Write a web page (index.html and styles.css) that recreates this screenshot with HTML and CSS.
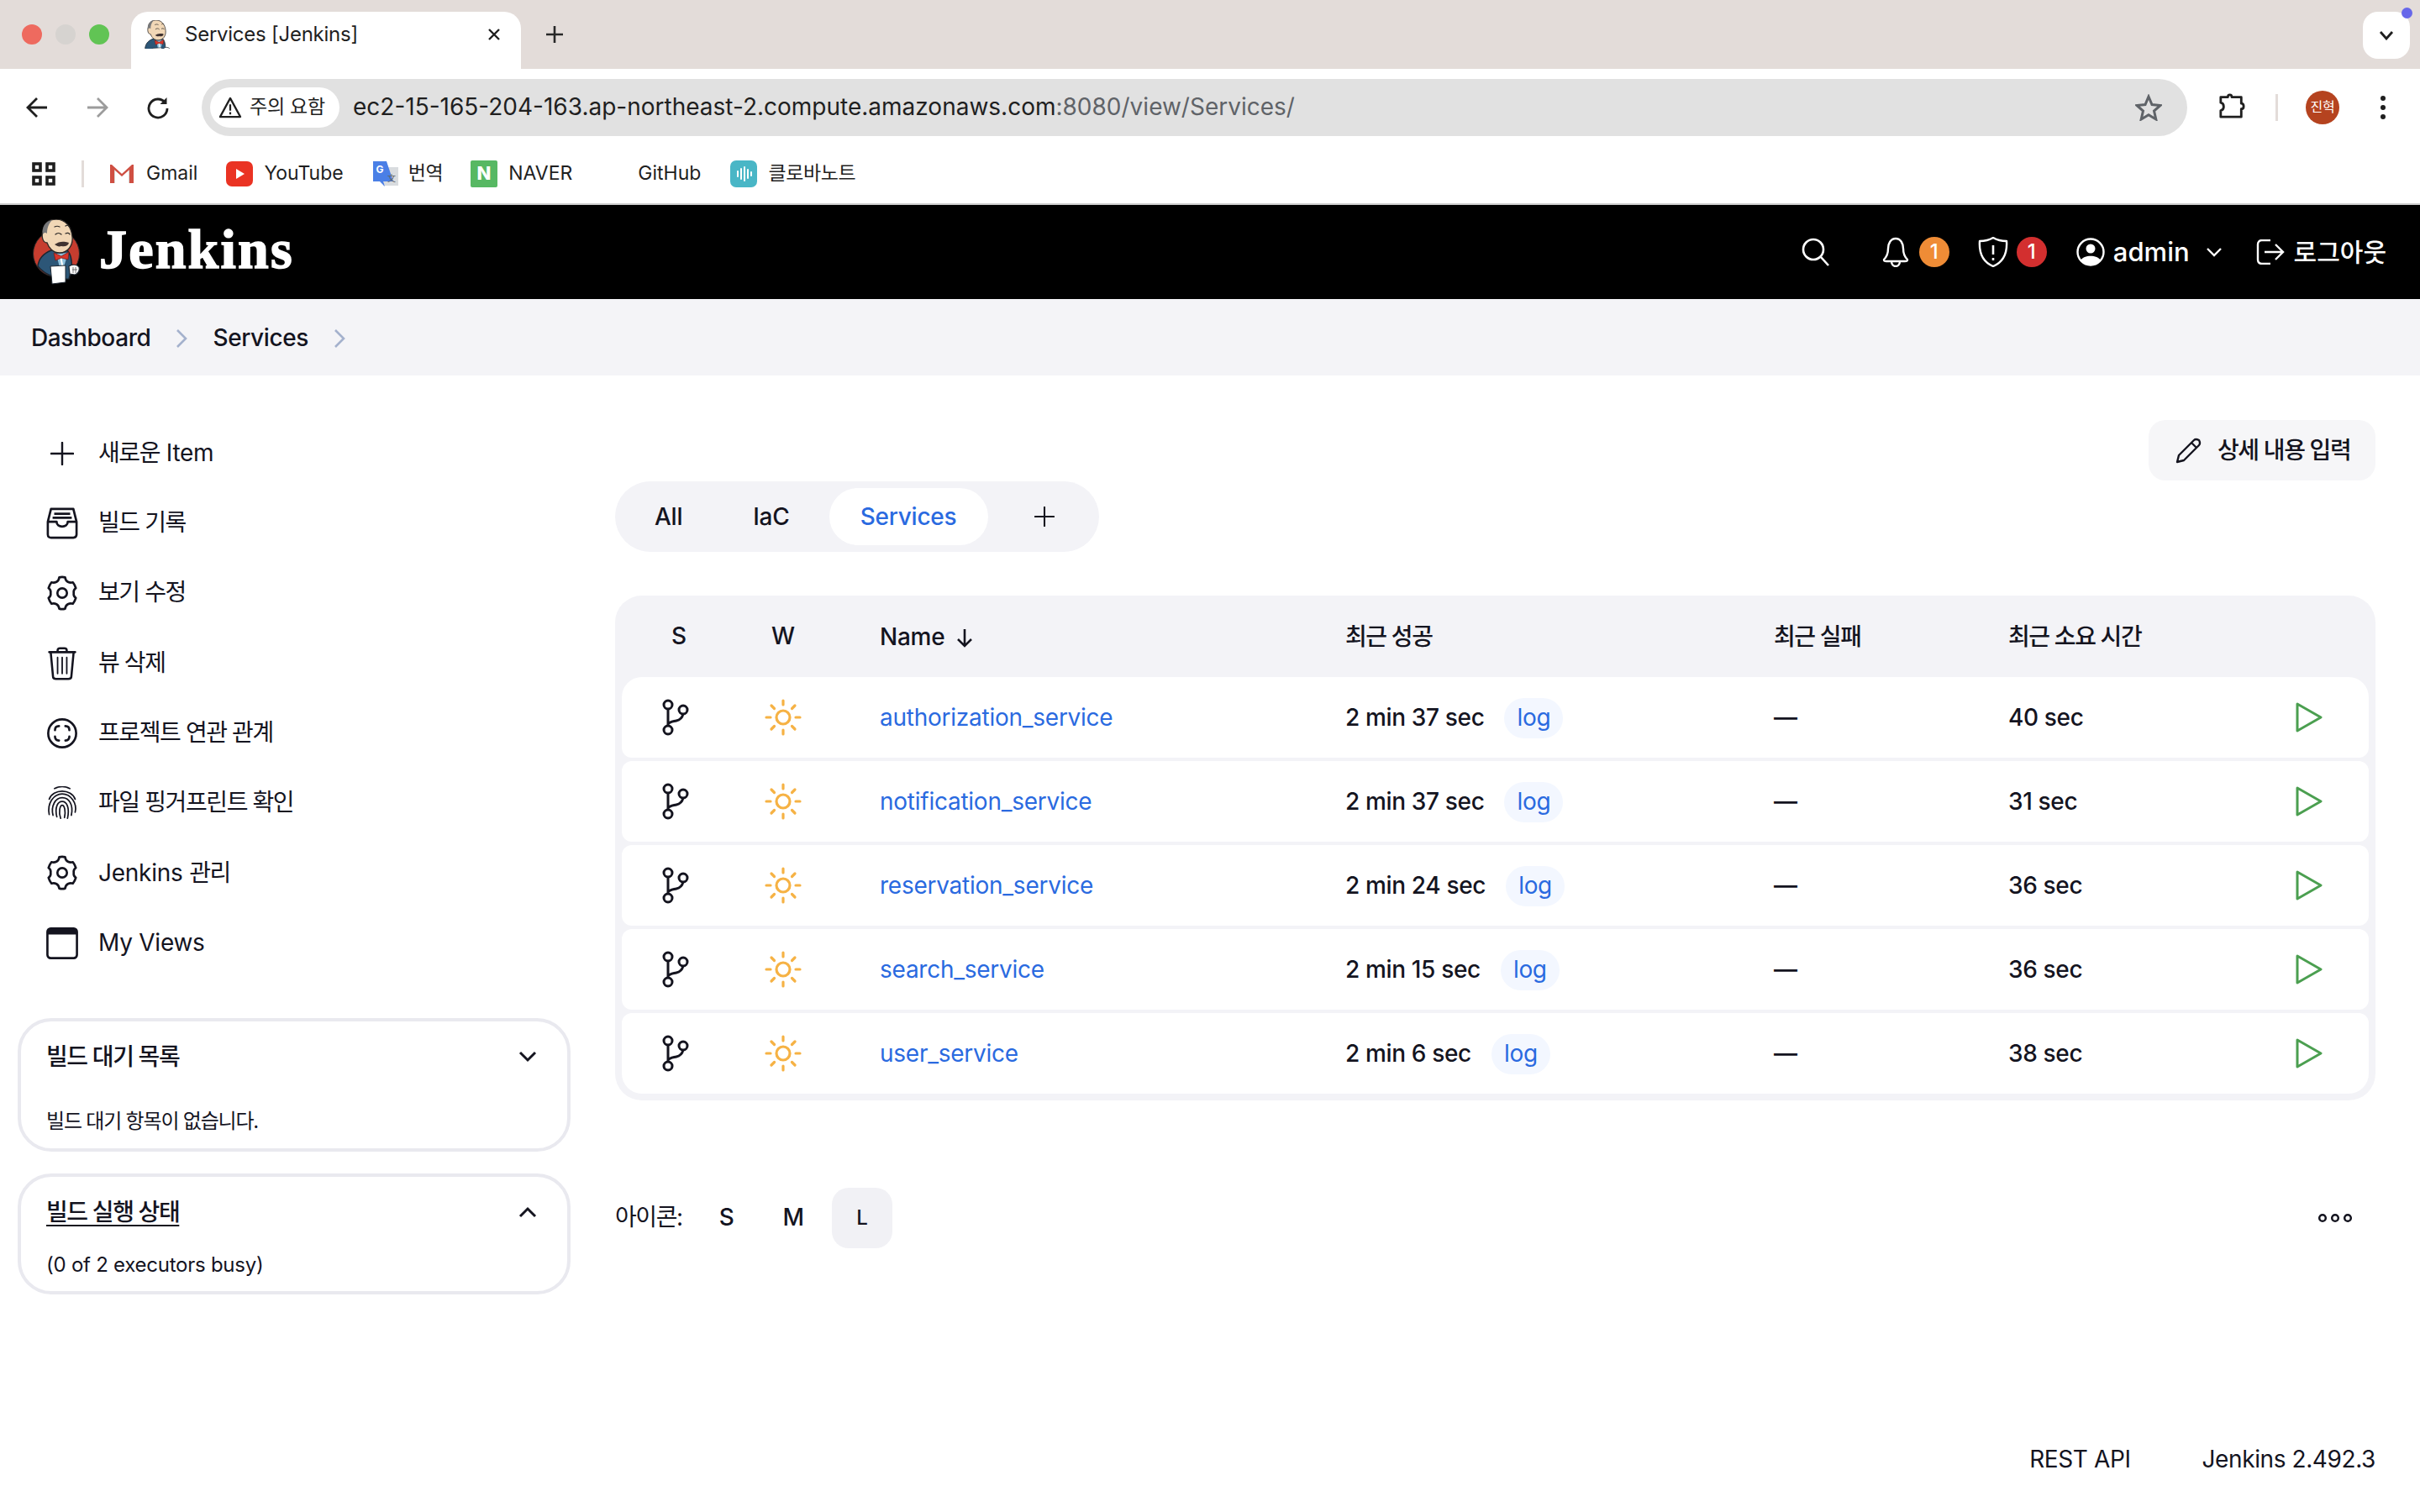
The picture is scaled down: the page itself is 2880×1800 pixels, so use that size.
FILE: index.html
```html
<!DOCTYPE html>
<html lang="ko">
<head>
<meta charset="utf-8">
<title>Services [Jenkins]</title>
<link rel="stylesheet" href="styles.css">
</head>
<body>
<svg class="defs" width="0" height="0" aria-hidden="true">
  <symbol id="butler" viewBox="0 0 56 78">
    <path d="M6 56C7 47 12 41 22 37L40 36C46 41 47 50 46 60L43 71C33 72 16 68 6 56Z" fill="#2c5677" stroke="#1d2630" stroke-width="1.4"/>
    <path d="M28 41L42 40L36 60L33 62Z" fill="#8fc0dc"/>
    <path d="M33 43L36 60" stroke="#fff" stroke-width="2"/>
    <path d="M25 40L34 44L43 39L42 48L34 46L27 49Z" fill="#d9362b" stroke="#7c1d16" stroke-width=".8"/>
    <path d="M12 14C13 4 20 0 28 0C39 0 46 9 47 21C48 31 42 40 32 40C24 40 19 34 17 28C12 28 10 21 12 14Z" fill="#f1d7b6" stroke="#2d2a28" stroke-width="1.3"/>
    <path d="M12 18C10 9 16 2 23 1C18 6 17 12 17 17C15 15 13 16 12 18Z" fill="#77787a"/>
    <path d="M27 18c2-2 5-2 7 0M39 17c2-1 4-1 5 1M26 9c2-1 4-1 6 0M39 8c1-1 3-1 4 0" fill="none" stroke="#2d2a28" stroke-width="1.2" stroke-linecap="round"/>
    <path d="M26 30c4-3 9-4 13-3c2 0 3 1 4 1c-1 4-5 5-9 4c-3 1-5 0-8-2Z" fill="#3f3230"/>
    <path d="M21 56L39 55L39 75L23 77Z" fill="#fff" stroke="#1d2630" stroke-width="1"/>
    <path d="M43 56C47 53 53 54 55 57C56 61 54 65 50 66L44 65Z" fill="#fff" stroke="#1d2630" stroke-width="1.2"/>
    <path d="M48 57v7M51 57v7M47 60h6" stroke="#555" stroke-width=".8"/>
  </symbol>
  <symbol id="gear" viewBox="0 0 40 44">
    <path d="M16.300 2.400Q20 1.200 23.700 2.400Q24.200 6.600 27.200 8.100Q30.200 9.600 33.400 8.600Q36 12 37.100 15.800Q33.800 18 34.500 22Q33.800 26 37.100 28.200Q36 32 33.400 35.400Q30.200 34.400 27.200 35.900Q24.200 37.400 23.700 41.600Q20 42.800 16.300 41.600Q15.800 37.400 12.800 35.900Q9.800 34.400 6.600 35.400Q4 32 2.900 28.200Q6.200 26 5.500 22Q6.200 18 2.900 15.800Q4 12 6.600 8.600Q9.800 9.600 12.800 8.100Q15.800 6.600 16.300 2.400Z" fill="none" stroke="#14141f" stroke-width="2.800" stroke-linejoin="round"/>
    <circle cx="20" cy="22" r="6" fill="none" stroke="#14141f" stroke-width="2.800"/>
  </symbol>
  <symbol id="branch" viewBox="0 0 42 44">
    <g fill="none" stroke="#14141f" stroke-width="3">
      <circle cx="8" cy="7" r="5"/><circle cx="8" cy="37" r="5"/><circle cx="26" cy="13" r="5"/>
      <path d="M8 12V32M8 30c2-3 6-3 10-4c5-1 7-4 8-8"/>
    </g>
  </symbol>
  <symbol id="sun" viewBox="0 0 44 44">
    <g fill="none" stroke="#f6b244" stroke-width="3.200" stroke-linecap="round">
      <circle cx="22" cy="22" r="8"/>
      <path d="M22 2v5M22 37v5M2 22h5M37 22h5M8 8l3.500 3.500M32.500 32.500l3.500 3.500M8 36l3.500-3.500M32.500 11.500l3.500-3.500"/>
    </g>
  </symbol>
  <symbol id="play" viewBox="0 0 32 36">
    <path d="M2 2L30 18L2 34Z" fill="none" stroke="#4b9f50" stroke-width="3" stroke-linejoin="round"/>
  </symbol>
  <symbol id="plus" viewBox="0 0 30 30">
    <path d="M15 1V29M1 15H29" stroke="#14141f" stroke-width="2.600" stroke-linecap="round"/>
  </symbol>
</svg>

<div class="app">
  <div class="tabstrip">
    <div class="lights"><span class="light red"></span><span class="light gray"></span><span class="light green"></span></div>
    <div class="tab">
      <svg class="favicon" viewBox="5 0 50 57"><use href="#butler" width="56" height="78"/></svg>
      <span class="tab-title">Services [Jenkins]</span>
      <svg class="tab-close" viewBox="0 0 16 16"><path d="M2 2L14 14M14 2L2 14" stroke="#1f1f1f" stroke-width="2.400"/></svg>
    </div>
    <svg class="newtab" viewBox="0 0 22 22"><path d="M11 1V21M1 11H21" stroke="#282828" stroke-width="2.600"/></svg>
    <div class="tabsearch">
      <svg class="tabsearch-chev" viewBox="0 0 18 12"><path d="M2 2L9 10L16 2" fill="none" stroke="#1f1f1f" stroke-width="2.800"/></svg>
      <span class="tabsearch-dot"></span>
    </div>
  </div>

  <div class="toolbar">
    <svg class="nav-icon" viewBox="0 0 28 28"><path d="M26 14H4M14 3L3 14L14 25" fill="none" stroke="#1f1f1f" stroke-width="2.800"/></svg>
    <svg class="nav-icon" viewBox="0 0 28 28"><path d="M2 14H24M14 3L25 14L14 25" fill="none" stroke="#9c9c9c" stroke-width="2.800"/></svg>
    <svg class="nav-icon" viewBox="0 0 28 28"><path d="M22.500 8A11 11 0 1 0 25 15" fill="none" stroke="#1f1f1f" stroke-width="2.800"/><path d="M24.500 2V10H16.500Z" fill="#1f1f1f"/></svg>
    <div class="omnibox">
      <div class="chip">
        <svg class="warn" viewBox="0 0 30 28"><path d="M15 2L28 26H2Z" fill="none" stroke="#1f1f1f" stroke-width="2.400" stroke-linejoin="round"/><path d="M15 10V18M15 20V23" stroke="#1f1f1f" stroke-width="2.400"/></svg>
        <span>주의 요함</span>
      </div>
      <div class="url">ec2-15-165-204-163.ap-northeast-2.compute.amazonaws.com<span class="url-dim">:8080/view/Services/</span></div>
      <svg class="star" viewBox="0 0 32 32"><path d="M16 3L20 12.500L30 13.500L22.500 20L24.800 30L16 24.800L7.200 30L9.500 20L2 13.500L12 12.500Z" fill="none" stroke="#5f6368" stroke-width="3" stroke-linejoin="miter"/></svg>
    </div>
    <svg class="ext" viewBox="0 0 34 34"><path d="M3 6H12C12 2 17 2 17 6H29V14C33 14 33 21 29 21V31H3V23C8 22 8 14 3 13Z" fill="none" stroke="#1f1f1f" stroke-width="3" stroke-linejoin="round"/></svg>
    <span class="tb-sep"></span>
    <span class="avatar">진혁</span>
    <svg class="kebab" viewBox="0 0 8 30"><circle cx="4" cy="4" r="3" fill="#1f1f1f"/><circle cx="4" cy="15" r="3" fill="#1f1f1f"/><circle cx="4" cy="26" r="3" fill="#1f1f1f"/></svg>
  </div>

  <div class="bookmarks">
    <svg class="apps" viewBox="0 0 28 28"><g fill="none" stroke="#1f1f1f" stroke-width="3.600"><rect x="2" y="2" width="8" height="8"/><rect x="18" y="2" width="8" height="8"/><rect x="2" y="18" width="8" height="8"/><rect x="18" y="18" width="8" height="8"/></g></svg>
    <span class="bm-sep"></span>
    <div class="bm bm-gmail"><svg class="bm-icon" viewBox="0 0 32 32"><path d="M2 5V27H8V12L16 19L24 12V27H30V5L16 16Z" fill="#d9d6d3"/><path d="M2 27V5H4L16 16L28 5H30V27H25V11L16 19L7 11V27Z" fill="#cf4f42"/></svg><span>Gmail</span></div>
    <div class="bm bm-yt"><svg class="bm-icon" viewBox="0 0 32 32"><rect y="1" width="32" height="30" rx="7" fill="#ea3323"/><path d="M12 10L22 16L12 22Z" fill="#fff"/></svg><span>YouTube</span></div>
    <div class="bm bm-tr"><svg class="bm-icon" viewBox="0 0 32 32"><path d="M12 8H30V30H12Z" fill="#d9dcdf"/><path d="M0 1H16L24 25H12L14 31L8 25H0Z" fill="#4a7fe6"/><text x="8" y="15" class="g-glyph">G</text><text x="17" y="25" class="t-glyph">文</text></svg><span class="ko">번역</span></div>
    <div class="bm bm-nv"><svg class="bm-icon" viewBox="0 0 32 32"><rect width="32" height="32" rx="2" fill="#57b863"/><text x="16" y="23" class="n-glyph">N</text></svg><span>NAVER</span></div>
    <div class="bm bm-gh"><span>GitHub</span></div>
    <div class="bm bm-cl"><svg class="bm-icon" viewBox="0 0 32 32"><rect width="32" height="32" rx="7" fill="#49b6c6"/><path d="M9 13v6M13 10v12M17 8v16M21 11v10M25 14v4" stroke="#fff" stroke-width="2" stroke-linecap="round"/></svg><span class="ko">클로바노트</span></div>
  </div>

  <header class="jheader">
    <svg class="logo" viewBox="0 0 56 78"><circle cx="28" cy="41" r="27.500" fill="#c63d2f" stroke="#262626" stroke-width="1"/><use href="#butler" width="56" height="78"/></svg>
    <span class="wordmark">Jenkins</span>
    <div class="jnav">
      <svg class="jn-search" viewBox="0 0 34 34"><circle cx="14" cy="14" r="12" fill="none" stroke="#fff" stroke-width="2.600"/><path d="M23 23L32 33" stroke="#fff" stroke-width="2.600"/></svg>
      <svg class="jn-bell" viewBox="0 0 32 36"><path d="M16 2C10 2 7 8 7 14C7 21 5 24 2 27C2 29 3 29 5 29H27C29 29 30 29 30 27C27 24 25 21 25 14C25 8 22 2 16 2ZM11 29C11 37 21 37 21 29" fill="none" stroke="#fff" stroke-width="2.400" stroke-linejoin="round"/></svg>
      <span class="badge orange">1</span>
      <svg class="jn-shield" viewBox="0 0 36 36"><path d="M18 1C23 4 28 5 34 5C35 20 30 30 18 35C6 30 1 20 2 5C8 5 13 4 18 1Z" fill="none" stroke="#fff" stroke-width="2.400" stroke-linejoin="round"/><path d="M18 10V21M18 25V28" stroke="#fff" stroke-width="2.600"/></svg>
      <span class="badge redb">1</span>
      <svg class="jn-user" viewBox="0 0 34 34"><circle cx="17" cy="17" r="15.500" fill="none" stroke="#fff" stroke-width="2.400"/><circle cx="17" cy="13" r="5.500" fill="#fff"/><path d="M5 27C9 20 25 20 29 27C23 34 11 34 5 27Z" fill="#fff"/></svg>
      <span class="jn-admin">admin</span>
      <svg class="jn-chev" viewBox="0 0 20 12"><path d="M2 2L10 10L18 2" fill="none" stroke="#fff" stroke-width="2.400"/></svg>
      <svg class="jn-logout" viewBox="0 0 34 30"><path d="M17 1H7C4 1 2 3 2 6V24C2 27 4 29 7 29H17" fill="none" stroke="#fff" stroke-width="2.400"/><path d="M10 15H31M23 6L32 15L23 24" fill="none" stroke="#fff" stroke-width="2.400"/></svg>
      <span class="jn-logout-text">로그아웃</span>
    </div>
  </header>

  <nav class="crumbs">
    <span>Dashboard</span>
    <svg class="crumb-chev" viewBox="0 0 14 24"><path d="M2 2L12 12L2 22" fill="none" stroke="#a4b1cd" stroke-width="2.600"/></svg>
    <span>Services</span>
    <svg class="crumb-chev" viewBox="0 0 14 24"><path d="M2 2L12 12L2 22" fill="none" stroke="#a4b1cd" stroke-width="2.600"/></svg>
  </nav>

  <div class="layout">
    <aside class="side">
      <ul class="tasks">
        <li class="task"><span class="task-ic"><svg class="ic-plus"><use href="#plus"/></svg></span><span><span class="ko">새로운</span> Item</span></li>
        <li class="task"><span class="task-ic"><svg class="ic-40" viewBox="0 0 40 40"><g fill="none" stroke="#14141f" stroke-width="2.800" stroke-linejoin="round"><path d="M6 2H34L38 18V34C38 37 36 38 34 38H6C4 38 2 37 2 34V18Z"/><path d="M2 18H13C13 26 27 26 27 18H38"/><path d="M10 8H30M8 13H32"/></g></svg></span><span class="ko">빌드 기록</span></li>
        <li class="task"><span class="task-ic"><svg class="ic-gear"><use href="#gear"/></svg></span><span class="ko">보기 수정</span></li>
        <li class="task"><span class="task-ic"><svg class="ic-40" viewBox="0 0 40 44"><g fill="none" stroke="#14141f" stroke-width="2.800" stroke-linejoin="round" stroke-linecap="round"><path d="M5 7L8 39C8 41 10 42 12 42H28C30 42 32 41 32 39L35 7"/><path d="M3 7H37M14 7V5C14 3 15 2 17 2H23C25 2 26 3 26 5V7"/><path d="M14 14V35M20 14V35M26 14V35" stroke-width="2"/></g></svg></span><span class="ko">뷰 삭제</span></li>
        <li class="task"><span class="task-ic"><svg class="ic-40" viewBox="0 0 40 40"><g fill="none" stroke="#14141f" stroke-width="2.800" stroke-linecap="round"><circle cx="20" cy="20" r="17.500"/><path d="M11 16c0-3 2-5 5-5M24 11c3 0 5 2 5 5M29 24c0 3-2 5-5 5M16 29c-3 0-5-2-5-5"/></g></svg></span><span class="ko">프로젝트 연관 관계</span></li>
        <li class="task"><span class="task-ic"><svg class="ic-40" viewBox="0 0 40 44"><g fill="none" stroke="#14141f" stroke-width="1.900" stroke-linecap="round"><path d="M10 3C16 0 24 0 30 3"/><path d="M3 17C8 3 32 3 37 17"/><path d="M3 37C0 22 9 10 20 10C31 10 40 22 37 34"/><path d="M8 38C5 26 11 15 20 15C29 15 35 24 32 38"/><path d="M13 40C10 28 14 20 20 20C26 20 30 28 27 42"/><path d="M18 42C15 34 17 25 20 25C23 25 25 33 23 41"/></g></svg></span><span class="ko">파일 핑거프린트 확인</span></li>
        <li class="task"><span class="task-ic"><svg class="ic-gear"><use href="#gear"/></svg></span><span>Jenkins <span class="ko">관리</span></span></li>
        <li class="task"><span class="task-ic"><svg class="ic-40" viewBox="0 0 40 40"><rect x="1.500" y="1.500" width="37" height="37" rx="4" fill="none" stroke="#14141f" stroke-width="2.800"/><path d="M2 3C2 2 3 2 5 2H35C37 2 38 2 38 3V9H2Z" fill="#14141f"/></svg></span><span>My Views</span></li>
      </ul>
      <section class="panel panel-queue">
        <div class="panel-head"><span class="panel-title ko">빌드 대기 목록</span><svg class="panel-chev" viewBox="0 0 22 14"><path d="M2 2L11 11L20 2" fill="none" stroke="#14141f" stroke-width="3"/></svg></div>
        <p class="panel-text ko">빌드 대기 항목이 없습니다.</p>
      </section>
      <section class="panel panel-exec">
        <div class="panel-head"><span class="panel-title ko linked">빌드 실행 상태</span><svg class="panel-chev" viewBox="0 0 22 14"><path d="M2 12L11 3L20 12" fill="none" stroke="#14141f" stroke-width="3"/></svg></div>
        <p class="panel-text">(0 of 2 executors busy)</p>
      </section>
    </aside>

    <main class="main">
      <div class="actions">
        <div class="edit-btn">
          <svg class="pencil" viewBox="0 0 32 32"><path d="M3 29L5 21L23 3C25 1 27 2 29 3C30 5 31 7 29 9L11 27ZM20 6L26 12" fill="none" stroke="#14141f" stroke-width="2.400" stroke-linejoin="round"/></svg>
          <span class="ko">상세 내용 입력</span>
        </div>
      </div>
      <div class="viewtabs">
        <span class="vt vt-all">All</span>
        <span class="vt vt-iac">IaC</span>
        <span class="vt vt-active">Services</span>
        <svg class="vt-plus"><use href="#plus"/></svg>
      </div>

      <div class="jobs">
        <div class="jobs-row jobs-head">
          <div class="c-s">S</div>
          <div class="c-w">W</div>
          <div class="c-name">Name <svg class="sort" viewBox="0 0 20 24"><path d="M10 2V22M2 14L10 22L18 14" fill="none" stroke="#14141f" stroke-width="2.600"/></svg></div>
          <div class="c-ok ko">최근 성공</div>
          <div class="c-fail ko">최근 실패</div>
          <div class="c-dur ko">최근 소요 시간</div>
          <div class="c-act"></div>
        </div>
        <div class="jobs-row job">
          <div class="c-s"><svg class="ic-branch"><use href="#branch"/></svg></div>
          <div class="c-w"><svg class="ic-sun"><use href="#sun"/></svg></div>
          <div class="c-name"><a class="link">authorization_service</a></div>
          <div class="c-ok">2 min 37 sec<span class="logpill">log</span></div>
          <div class="c-fail">—</div>
          <div class="c-dur">40 sec</div>
          <div class="c-act"><svg class="ic-play"><use href="#play"/></svg></div>
        </div>
        <div class="jobs-row job">
          <div class="c-s"><svg class="ic-branch"><use href="#branch"/></svg></div>
          <div class="c-w"><svg class="ic-sun"><use href="#sun"/></svg></div>
          <div class="c-name"><a class="link">notification_service</a></div>
          <div class="c-ok">2 min 37 sec<span class="logpill">log</span></div>
          <div class="c-fail">—</div>
          <div class="c-dur">31 sec</div>
          <div class="c-act"><svg class="ic-play"><use href="#play"/></svg></div>
        </div>
        <div class="jobs-row job">
          <div class="c-s"><svg class="ic-branch"><use href="#branch"/></svg></div>
          <div class="c-w"><svg class="ic-sun"><use href="#sun"/></svg></div>
          <div class="c-name"><a class="link">reservation_service</a></div>
          <div class="c-ok">2 min 24 sec<span class="logpill">log</span></div>
          <div class="c-fail">—</div>
          <div class="c-dur">36 sec</div>
          <div class="c-act"><svg class="ic-play"><use href="#play"/></svg></div>
        </div>
        <div class="jobs-row job">
          <div class="c-s"><svg class="ic-branch"><use href="#branch"/></svg></div>
          <div class="c-w"><svg class="ic-sun"><use href="#sun"/></svg></div>
          <div class="c-name"><a class="link">search_service</a></div>
          <div class="c-ok">2 min 15 sec<span class="logpill">log</span></div>
          <div class="c-fail">—</div>
          <div class="c-dur">36 sec</div>
          <div class="c-act"><svg class="ic-play"><use href="#play"/></svg></div>
        </div>
        <div class="jobs-row job">
          <div class="c-s"><svg class="ic-branch"><use href="#branch"/></svg></div>
          <div class="c-w"><svg class="ic-sun"><use href="#sun"/></svg></div>
          <div class="c-name"><a class="link">user_service</a></div>
          <div class="c-ok">2 min 6 sec<span class="logpill">log</span></div>
          <div class="c-fail">—</div>
          <div class="c-dur">38 sec</div>
          <div class="c-act"><svg class="ic-play"><use href="#play"/></svg></div>
        </div>
      </div>

      <div class="legend">
        <span class="legend-label ko">아이콘:</span>
        <span class="size size-s">S</span>
        <span class="size size-m">M</span>
        <span class="size size-l">L</span>
        <svg class="more" viewBox="0 0 42 12"><g fill="none" stroke="#14141f" stroke-width="2.500"><circle cx="6" cy="6" r="3.800"/><circle cx="21" cy="6" r="3.800"/><circle cx="36" cy="6" r="3.800"/></g></svg>
      </div>

      <footer class="foot">
        <span>REST API</span>
        <span class="foot-ver">Jenkins 2.492.3</span>
      </footer>
    </main>
  </div>
</div>
</body>
</html>
```
FILE: styles.css
```css
* { box-sizing: border-box; }
html, body { margin: 0; padding: 0; }
body {
  width: 2880px;
  height: 1800px;
  overflow: hidden;
  background: #fff;
  color: #14141f;
  font-family: Inter, "Noto Sans CJK KR", sans-serif;
  font-size: 28px;
  line-height: 1.2;
  letter-spacing: -0.25px;
}
.ko { letter-spacing: -1.4px; }
.defs { position: absolute; }
svg { display: block; flex: none; }
ul { list-style: none; margin: 0; padding: 0; }
p { margin: 0; }

.app { display: flex; flex-direction: column; height: 1800px; }

/* Browser tab strip */
.tabstrip {
  height: 82px;
  flex: none;
  background: #e3dcd9;
  display: flex;
  align-items: flex-end;
  position: relative;
}
.lights { display: flex; gap: 16px; margin: 0 0 29px 26px; }
.light { width: 24px; height: 24px; border-radius: 50%; }
.red { background: #ee6a5f; }
.gray { background: #d6d3d0; }
.green { background: #61c454; }
.tab {
  width: 464px;
  height: 68px;
  margin-left: 26px;
  background: #fff;
  border-radius: 20px 20px 0 0;
  display: flex;
  align-items: center;
  padding: 0 24px 14px 16px;
  color: #1f1f1f;
  font-size: 24px;
}
.favicon { width: 30px; height: 34px; }
.tab-title { margin-left: 18px; flex: 1; }
.tab-close { width: 16px; height: 16px; }
.newtab { width: 22px; height: 22px; margin: 0 0 30px 29px; }
.tabsearch {
  margin-left: auto;
  margin-right: 12px;
  margin-bottom: 12px;
  width: 56px;
  height: 56px;
  background: #fff;
  border-radius: 18px;
  display: flex;
  align-items: center;
  justify-content: center;
  position: relative;
}
.tabsearch-chev { width: 18px; height: 12px; }
.tabsearch-dot {
  position: absolute;
  top: -5px;
  right: -3px;
  width: 13px;
  height: 13px;
  border-radius: 50%;
  background: #6767ea;
}

/* Browser toolbar */
.toolbar {
  height: 88px;
  flex: none;
  display: flex;
  align-items: center;
  padding: 4px 0 0 30px;
  gap: 44px;
  border-radius: 16px 16px 0 0;
  background: #fff;
}
.nav-icon { width: 28px; height: 28px; }
.omnibox {
  width: 2363px;
  height: 68px;
  margin-left: -6px;
  margin-right: -7px;
  border-radius: 34px;
  background: #e1e1e1;
  display: flex;
  align-items: center;
  padding: 0 30px 0 10px;
}
.chip {
  height: 48px;
  width: 154px;
  border-radius: 24px;
  background: #fff;
  display: flex;
  align-items: center;
  gap: 9px;
  padding-left: 10px;
  font-size: 23px;
  color: #1f1f1f;
}
.warn { width: 28px; height: 26px; }
.url { margin-left: 16px; flex: 1; font-size: 28px; letter-spacing: 0; color: #1f1f1f; white-space: nowrap; }
.url-dim { color: #5f6368; }
.star { width: 32px; height: 32px; }
.ext { width: 32px; height: 32px; margin-top: -4px; }
.tb-sep { width: 3px; height: 32px; background: #e3dcd9; margin-left: -8px; }
.avatar {
  width: 40px;
  height: 40px;
  margin-left: -11px;
  border-radius: 50%;
  background: #b5431f;
  color: #fff;
  font-size: 16px;
  display: flex;
  align-items: center;
  justify-content: center;
}
.kebab { width: 8px; height: 30px; margin-left: 4px; }

/* Bookmarks */
.bookmarks {
  height: 74px;
  flex: none;
  display: flex;
  align-items: center;
  padding: 2px 0 0 38px;
  border-bottom: 2px solid #cdcdcd;
  font-size: 23px;
  letter-spacing: 0;
  color: #1f1f1f;
}
.apps { width: 28px; height: 28px; }
.bm-sep { width: 3px; height: 32px; margin-left: 31px; background: #e3dcd9; }
.bm { display: flex; align-items: center; gap: 13px; }
.bm-icon { width: 32px; height: 32px; }
.bm-gmail { margin-left: 29px; }
.bm-yt { margin-left: 34px; }
.bm-tr { margin-left: 35px; gap: 10px; }
.bm-nv { margin-left: 33px; }
.bm-gh { margin-left: 78px; }
.bm-cl { margin-left: 35px; }
.bookmarks .ko { letter-spacing: -0.4px; }
.g-glyph { font: 700 12px Inter, sans-serif; fill: #fff; text-anchor: middle; }
.t-glyph { font: 10px "Noto Sans CJK KR", sans-serif; fill: #666; }
.n-glyph { font: 800 22px Inter, sans-serif; fill: #fff; text-anchor: middle; }

/* Jenkins header */
.jheader {
  height: 112px;
  flex: none;
  background: #000;
  color: #fff;
  display: flex;
  align-items: center;
  padding: 0 40px 0 39px;
}
.logo { width: 56px; height: 78px; }
.wordmark {
  margin: 0 0 7px 23px;
  font-family: "Liberation Serif", serif;
  font-weight: 700;
  font-size: 66px;
  letter-spacing: 2.2px;
  line-height: 1;
  -webkit-text-stroke: 1.5px #fff;
}
.jnav { margin-left: auto; display: flex; align-items: center; font-weight: 500; font-size: 31px; letter-spacing: 0; }
.jn-search { width: 34px; height: 34px; }
.jn-bell { width: 32px; height: 36px; margin-left: 62px; }
.badge {
  width: 36px;
  height: 36px;
  border-radius: 50%;
  display: flex;
  align-items: center;
  justify-content: center;
  font-size: 24px;
  font-weight: 500;
}
.orange { background: #ef8c36; margin-left: 12px; }
.redb { background: #d32f2f; margin-left: 10px; }
.jn-shield { width: 36px; height: 36px; margin-left: 34px; }
.jn-user { width: 34px; height: 34px; margin-left: 35px; }
.jn-admin { margin-left: 10px; }
.jn-chev { width: 20px; height: 12px; margin-left: 19px; }
.jn-logout { width: 34px; height: 30px; margin-left: 40px; }
.jn-logout-text { margin-left: 11px; font-size: 30px; letter-spacing: 0; }

/* Breadcrumbs */
.crumbs {
  height: 91px;
  flex: none;
  background: #f4f4f7;
  display: flex;
  align-items: center;
  padding: 2px 0 0 37px;
  font-weight: 500;
  letter-spacing: -0.4px;
}
.crumb-chev { width: 14px; height: 24px; margin: 0 30px; }

/* Page layout */
.layout { flex: 1; display: flex; min-height: 0; }
.side { width: 732px; flex: none; padding: 51px 0 0 21px; }
.task {
  height: 83.300px;
  display: flex;
  align-items: center;
}
.task-ic { width: 96px; display: flex; justify-content: center; padding-left: 10px; }
.ic-40 { width: 38px; height: 40px; }
.ic-gear { width: 38px; height: 42px; }
.ic-plus { width: 28px; height: 28px; }

.panel {
  width: 658px;
  border: 4px solid #e9e9ef;
  border-radius: 40px;
  padding: 0 32px 0 30px;
}
.panel-queue { height: 159px; margin-top: 48px; }
.panel-exec { height: 144px; margin-top: 26px; }
.panel-head { height: 84px; display: flex; align-items: center; justify-content: space-between; padding-right: 4px; font-weight: 500; }
.panel-chev { width: 22px; height: 14px; }
.panel-title.linked { text-decoration: underline; text-decoration-thickness: 2px; text-underline-offset: 5px; }
.panel-text { font-size: 24px; }
.panel-text.ko { letter-spacing: -1.2px; }
.panel-queue .panel-text { margin-top: 21px; }
.panel-exec .panel-text { margin-top: 7px; }

.main {
  flex: 1;
  min-width: 0;
  padding: 53px 53px 46px 0;
  display: flex;
  flex-direction: column;
}
.actions { display: flex; justify-content: flex-end; }
.edit-btn {
  width: 270px;
  height: 72px;
  border-radius: 20px;
  background: #f6f6f8;
  display: flex;
  align-items: center;
  padding: 2px 0 0 31px;
  gap: 19px;
  font-weight: 500;
}
.pencil { width: 32px; height: 32px; }

.viewtabs {
  width: 576px;
  height: 84px;
  margin-top: 1px;
  border-radius: 42px;
  background: #f3f3f7;
  display: flex;
  align-items: center;
  padding: 0 0 0 47px;
  font-weight: 500;
}
.vt { padding-top: 1px; }
.vt-iac { margin-left: 84px; }
.vt-active {
  margin-left: 47px;
  height: 68px;
  width: 189px;
  border-radius: 34px;
  background: #fff;
  color: #2a6ae0;
  display: flex;
  align-items: center;
  justify-content: center;
}
.vt-plus { width: 24px; height: 24px; margin-left: 55px; }

.jobs {
  margin-top: 52px;
  background: #f3f3f7;
  border-radius: 32px;
  padding: 0 8px 8px;
  display: flex;
  flex-direction: column;
  gap: 4px;
  font-weight: 450;
}
.jobs-row {
  display: grid;
  grid-template-columns: 136px 112px 613px 510px 279px 310px 1fr;
  align-items: center;
  height: 96px;
}
.jobs-head { height: 97px; margin-bottom: -4px; font-weight: 500; }
.job { background: #fff; border-radius: 12px; letter-spacing: -0.35px; }
.job:nth-child(2) { border-radius: 24px 24px 12px 12px; }
.job:last-child { border-radius: 12px 12px 24px 24px; }
.c-s, .c-w { display: flex; justify-content: center; }
.c-name, .c-ok { display: flex; align-items: center; }
.c-name { padding: 2px 0 0 59px; }
.c-ok, .c-fail, .c-dur { padding-top: 2px; }
.sort { width: 20px; height: 24px; margin-left: 14px; }
.ic-branch { width: 42px; height: 44px; }
.ic-sun { width: 44px; height: 44px; }
.ic-play { width: 32px; height: 36px; margin-left: 32px; }
.link { color: #2a6ae0; font-weight: 400; letter-spacing: -0.25px; }
.logpill {
  margin-left: 24px;
  width: 70px;
  height: 48px;
  border-radius: 24px;
  background: #f3f7ff;
  color: #2a6ae0;
  font-weight: 400;
  display: flex;
  align-items: center;
  justify-content: center;
}

.legend {
  margin-top: 104px;
  height: 72px;
  display: flex;
  align-items: center;
}
.size { font-weight: 500; }
.size-s { margin-left: 44px; }
.size-m { margin-left: 58px; }
.size-l {
  margin-left: 33px;
  width: 72px;
  height: 72px;
  border-radius: 20px;
  background: #f1f1f5;
  display: flex;
  align-items: center;
  justify-content: center;
  font-size: 24px;
}
.more { width: 42px; height: 12px; margin-left: auto; margin-right: 27px; }

.foot { margin-top: auto; display: flex; justify-content: flex-end; gap: 85px; line-height: 34px; letter-spacing: -0.4px; }
```
